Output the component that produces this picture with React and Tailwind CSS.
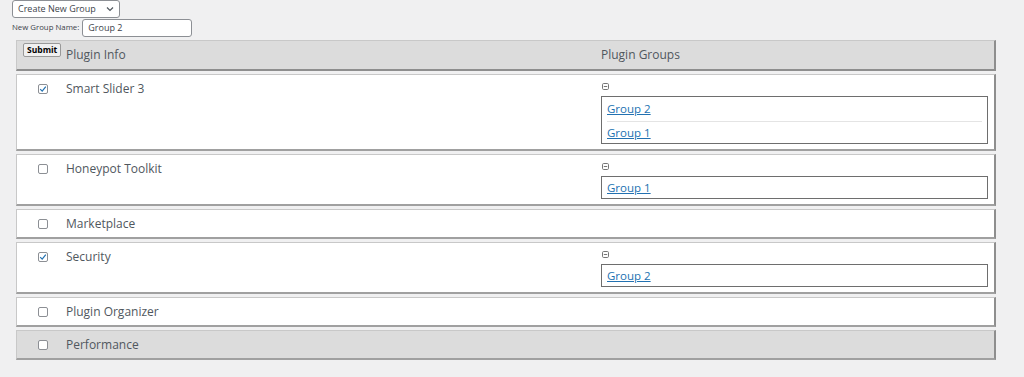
import React from "react";

const plugins = [
  { name: "Smart Slider 3", checked: true, groups: ["Group 2", "Group 1"] },
  { name: "Honeypot Toolkit", checked: false, groups: ["Group 1"] },
  { name: "Marketplace", checked: false, groups: [] },
  { name: "Security", checked: true, groups: ["Group 2"] },
  { name: "Plugin Organizer", checked: false, groups: [] },
  { name: "Performance", checked: false, groups: [], shaded: true },
];

const Check = ({ checked }) => (
  <span className="w-[10px] h-[10px] border border-[#8c8f94] rounded-[2px] bg-white flex items-center justify-center">
    {checked && (
      <svg width="8" height="8" viewBox="0 0 8 8">
        <path d="M1.2 4.1 L3.2 6.1 L6.8 1.6" fill="none" stroke="#2271b1" strokeWidth="1.2" />
      </svg>
    )}
  </span>
);

const Collapse = () => (
  <svg width="7" height="7" viewBox="0 0 7 7">
    <rect x="0.5" y="0.5" width="6" height="6" rx="1.2" fill="none" stroke="#777" />
    <path d="M1.8 3.5 H5.2" stroke="#777" />
  </svg>
);

const Row = ({ plugin }) => (
  <div
    className={`flex border border-[#c8c8c8] border-r-2 border-b-2 border-r-[#8e8e8e] border-b-[#a0a0a0] ${
      plugin.shaded ? "bg-[#dcdcdc]" : "bg-white"
    }`}
  >
    <div className="w-[584px] flex items-center h-[17px] mt-[5px] mb-[5px]">
      <div className="w-[49px] pl-[21px]">
        <Check checked={plugin.checked} />
      </div>
      <span className="text-[12px] leading-[17px]">{plugin.name}</span>
    </div>
    {plugin.groups.length > 0 && (
      <div className="flex-1 pt-[8px] pb-[5px] pr-[6px]">
        <div className="pl-[1px] h-[7px] flex items-center">
          <Collapse />
        </div>
        <div className="mt-[6px] border border-[#6e6e6e] px-[5px]">
          {plugin.groups.map((g, i) => (
            <div
              key={g}
              className={`flex items-center ${
                i < plugin.groups.length - 1 ? "h-[25px] border-b border-[#e4e4e4]" : "h-[21px]"
              }`}
            >
              <a href="#" className="text-[#2271b1] underline text-[11.5px]">
                {g}
              </a>
            </div>
          ))}
        </div>
      </div>
    )}
  </div>
);

export default function App() {
  return (
    <div
      className="bg-[#f0f0f1] min-h-[377px] text-[#50575e] pl-[12px]"
      style={{ fontFamily: "'Open Sans', 'Noto Sans', sans-serif" }}
    >
      <div className="w-[108px] h-[18px] border border-[#8c8f94] rounded-[3px] bg-white flex items-center justify-between px-[5px] text-[9px] text-[#3c434a]">
        <span>Create New Group</span>
        <svg width="8" height="6" viewBox="0 0 8 6">
          <path d="M1 1.5 L4 4.5 L7 1.5" fill="none" stroke="#50575e" strokeWidth="1.2" />
        </svg>
      </div>
      <div className="flex items-center mt-[1px] gap-[3px] text-[7.8px] text-[#3c434a]">
        <span>New Group Name:</span>
        <div className="w-[110px] h-[18px] border border-[#8c8f94] rounded-[3px] bg-white flex items-center px-[5px] text-[9px]">
          Group 2
        </div>
      </div>
      <div className="w-[980px] ml-[4px] mt-[3px] flex flex-col gap-[3px]">
        <div className="flex h-[31px] bg-[#dcdcdc] border border-[#c8c8c8] border-r-2 border-b-2 border-r-[#8e8e8e] border-b-[#8e8e8e]">
          <div className="w-[584px] flex">
            <div className="w-[49px] pl-[6px] pt-[2px] flex items-start">
              <button className="text-[8.5px] font-bold text-black bg-[#f0f0f0] border border-[#999] rounded-[2px] px-[3px] leading-[12px]">
                Submit
              </button>
            </div>
            <span className="text-[12px] leading-[17px] mt-[5px]">Plugin Info</span>
          </div>
          <span className="text-[12px] leading-[17px] mt-[5px]">Plugin Groups</span>
        </div>
        {plugins.map((p) => (
          <Row key={p.name} plugin={p} />
        ))}
      </div>
    </div>
  );
}
